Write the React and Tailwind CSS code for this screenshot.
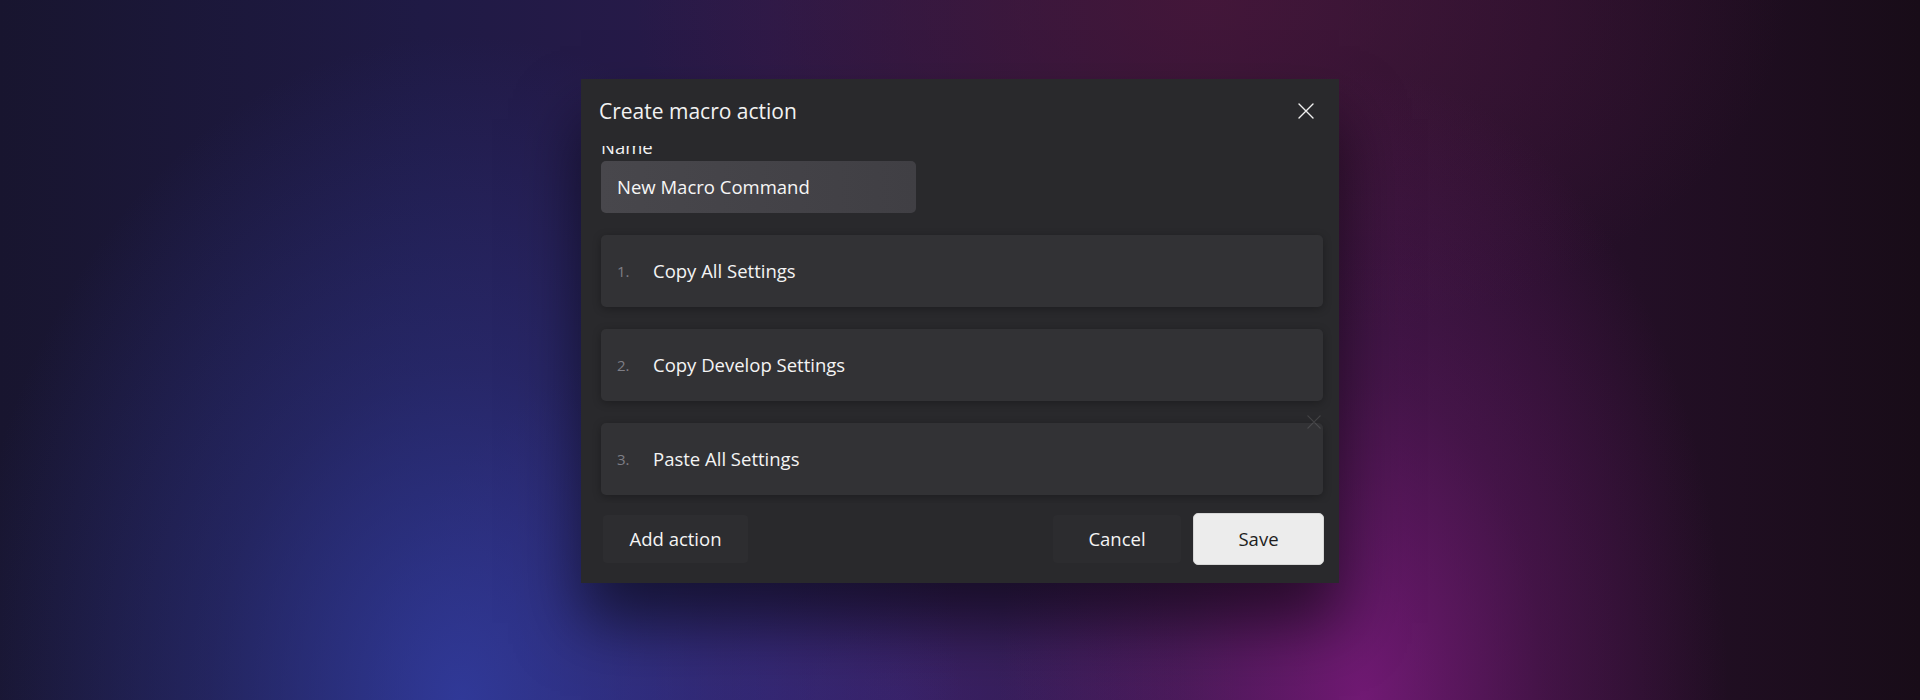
import React from "react";

function XIcon({ className }) {
  return (
    <svg viewBox="0 0 16 16" className={className} fill="none" stroke="currentColor" strokeWidth="1.4" strokeLinecap="round">
      <path d="M1 1 L15 15 M15 1 L1 15" />
    </svg>
  );
}

function ActionCard({ n, label, ghost }) {
  return (
    <div className="relative flex h-[72px] items-center rounded-[5px] bg-[#323235] pl-[16px] shadow-[0_2px_8px_rgba(0,0,0,0.28)]">
      <span className="w-[36px] text-[15px] text-[#7e7e86]">{n}.</span>
      <span className="text-[18.5px] text-[#f4f4f4]">{label}</span>
      {ghost && (
        <div className="absolute right-[2px] top-[-8px] text-white opacity-[0.12]">
          <XIcon className="h-[14px] w-[14px]" />
        </div>
      )}
    </div>
  );
}

export default function App() {
  return (
    <div
      className="flex h-[700px] w-full flex-col items-center overflow-hidden pt-[79px] bg-[radial-gradient(ellipse_26%_95%_at_24%_100%,rgba(50,62,165,0.85)_0%,rgba(50,62,165,0.35)_50%,rgba(50,62,165,0)_100%),radial-gradient(ellipse_19%_90%_at_71%_100%,rgba(120,26,122,0.9)_0%,rgba(120,26,122,0.35)_50%,rgba(120,26,122,0)_100%),radial-gradient(ellipse_30%_50%_at_63%_0%,rgba(72,22,58,0.8)_0%,rgba(72,22,58,0)_100%),radial-gradient(ellipse_28%_60%_at_47%_100%,rgba(70,40,130,0.55)_0%,rgba(70,40,130,0)_100%),linear-gradient(90deg,#18152f_0%,#1f1a45_22%,#2a1a4a_40%,#2e1737_62%,#27102b_80%,#180c18_100%)]"
      style={{ fontFamily: '"Open Sans", "Noto Sans", sans-serif' }}
    >
      <div className="flex h-[504px] w-[758px] flex-col bg-[#29292c] shadow-[0_40px_60px_rgba(0,0,0,0.55)]">
        {/* Header */}
        <div className="flex h-[67px] shrink-0 items-start justify-between pl-[18px] pr-[17px] pt-[18px]">
          <h1 className="text-[21px] leading-[28px] text-[#f2f2f2]">Create macro action</h1>
          <button className="-mt-[2px] flex h-[32px] w-[32px] items-center justify-center text-[#f0f0f0]">
            <XIcon className="h-[16px] w-[16px]" />
          </button>
        </div>

        {/* Scroll area */}
        <div className="flex-1 overflow-hidden pl-[20px] pr-[16px]">
          <div className="-mt-[11px] flex flex-col">
            <label className="text-[18.5px] leading-[24px] text-[#f2f2f2]">Name</label>
            <div className="mt-[2px] flex h-[52px] w-[315px] items-center rounded-[5px] bg-[linear-gradient(90deg,#48474c,#403f44)] pl-[16px] text-[18.5px] text-[#f6f6f6]">
              New Macro Command
            </div>
            <div className="mt-[22px] flex flex-col gap-[22px]">
              <ActionCard n={1} label="Copy All Settings" />
              <ActionCard n={2} label="Copy Develop Settings" />
              <ActionCard n={3} label="Paste All Settings" ghost />
            </div>
          </div>
        </div>

        {/* Footer */}
        <div className="flex h-[80px] shrink-0 items-start justify-between pl-[22px] pr-[15px] pt-[12px]">
          <button className="flex h-[48px] w-[145px] items-center justify-center rounded-[4px] bg-[#2d2d30] text-[18.5px] text-[#f4f4f4]">
            Add action
          </button>
          <div className="flex gap-[12px]">
            <button className="flex h-[48px] w-[128px] items-center justify-center rounded-[4px] bg-[#2c2c2f] text-[18.5px] text-[#f4f4f4]">
              Cancel
            </button>
            <button className="-mt-[2px] flex h-[52px] w-[131px] items-center justify-center rounded-[5px] border border-[#d6d6d6] bg-[#ececec] text-[18.5px] text-[#1e1e1e]">
              Save
            </button>
          </div>
        </div>
      </div>
    </div>
  );
}
